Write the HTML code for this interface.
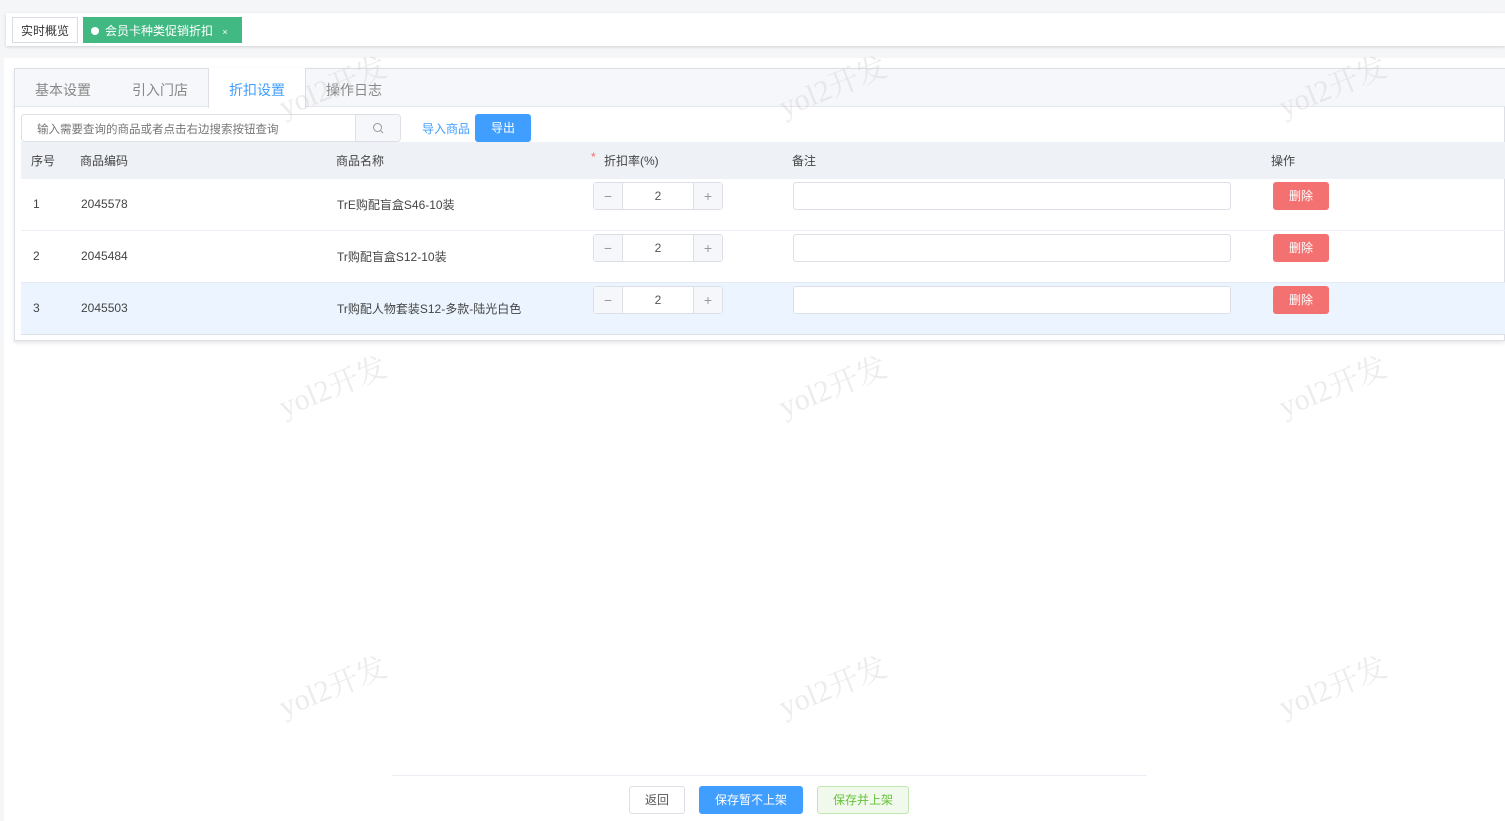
<!DOCTYPE html>
<html><head><meta charset="utf-8"><style>
*{box-sizing:border-box;margin:0;padding:0}
body{width:1505px;height:821px;overflow:hidden;background:#fff;font-family:"Liberation Sans","Noto Sans CJK SC",sans-serif;font-size:12px;color:#333;position:relative}
.abs{position:absolute}
.wm{position:absolute;font-family:"Liberation Serif","Noto Serif CJK SC",serif;font-size:30px;color:rgba(200,200,200,.35);transform:rotate(-22deg);white-space:nowrap;z-index:5;pointer-events:none}
.num{position:absolute;width:130px;height:28px;border:1px solid #dcdfe6;border-radius:3px;background:#fff;display:flex}
.num span{width:28px;background:#f5f7fa;color:#999;text-align:center;line-height:26px;font-size:14px}
.num b{flex:1;font-weight:normal;text-align:center;line-height:26px;border-left:1px solid #dcdfe6;border-right:1px solid #dcdfe6;color:#555}
.rem{position:absolute;left:793px;width:438px;height:28px;border:1px solid #dcdfe6;border-radius:3px;background:#fff}
.del{position:absolute;left:1273px;width:56px;height:28px;background:#f37171;border-radius:3px;color:#fff;text-align:center;line-height:28px}
.cell{position:absolute;color:#444}
</style></head><body>
<div class="abs" style="left:0;top:0;width:1505px;height:58px;background:#f5f6f8"></div>
<div class="abs" style="left:6px;top:13px;width:1499px;height:33px;background:#fff;box-shadow:0 1px 3px rgba(0,0,0,.15)"></div>
<div class="abs" style="left:12px;top:17px;width:66px;height:26px;border:1px solid #d8dce5;background:#fff;text-align:center;line-height:26px;color:#333">实时概览</div>
<div class="abs" style="left:83px;top:17px;width:159px;height:26px;background:#42b983;color:#fff;line-height:28px;padding-left:8px"><span style="display:inline-block;width:8px;height:8px;border-radius:50%;background:#fff;margin-right:6px"></span>会员卡种类促销折扣 <span style="font-size:9px;margin-left:6px">×</span></div>
<div class="abs" style="left:0;top:58px;width:4px;height:763px;background:#f5f6f8"></div>
<div class="abs" style="left:14px;top:68px;width:1491px;height:273px;border:1px solid #dcdfe6;box-shadow:0 2px 4px rgba(0,0,0,.1);background:#fff"></div>
<div class="abs" style="left:15px;top:69px;width:1490px;height:38px;background:#f5f7fa;border-bottom:1px solid #e4e7ed"></div>
<div class="abs" style="left:208px;top:68px;width:98px;height:40px;background:#fff;border-left:1px solid #dcdfe6;border-right:1px solid #dcdfe6"></div>
<div class="abs" style="left:35px;top:80px;font-size:14px;color:#888">基本设置</div>
<div class="abs" style="left:132px;top:80px;font-size:14px;color:#888">引入门店</div>
<div class="abs" style="left:229px;top:80px;font-size:14px;color:#409eff">折扣设置</div>
<div class="abs" style="left:326px;top:80px;font-size:14px;color:#888">操作日志</div>
<div class="abs" style="left:21px;top:114px;width:380px;height:28px;border:1px solid #dcdfe6;border-radius:4px;background:#fff"></div>
<div class="abs" style="left:355px;top:115px;width:45px;height:26px;background:#f5f7fa;border-left:1px solid #dcdfe6;border-radius:0 4px 4px 0"></div>
<svg class="abs" style="left:372px;top:122px" width="12" height="12" viewBox="0 0 12 12"><circle cx="5.5" cy="5.5" r="4" fill="none" stroke="#999" stroke-width="1"/><path d="M8.5 8.5L11 11" stroke="#999"/></svg>
<div class="abs" style="left:37px;top:121px;color:#777;font-size:11.5px">输入需要查询的商品或者点击右边搜索按钮查询</div>
<div class="abs" style="left:422px;top:120px;color:#409eff">导入商品</div>
<div class="abs" style="left:475px;top:114px;width:56px;height:28px;background:#409eff;border-radius:3px;color:#fff;text-align:center;line-height:28px">导出</div>
<div class="abs" style="left:21px;top:142px;width:1484px;height:37px;background:#eef1f6"></div>
<div class="cell" style="left:31px;top:152px;color:#444">序号</div>
<div class="cell" style="left:80px;top:152px">商品编码</div>
<div class="cell" style="left:336px;top:152px">商品名称</div>
<div class="cell" style="left:591px;top:150px;color:#f56c6c">*</div>
<div class="cell" style="left:604px;top:152px">折扣率(%)</div>
<div class="cell" style="left:792px;top:152px">备注</div>
<div class="cell" style="left:1271px;top:152px">操作</div>
<div class="abs" style="left:21px;top:230px;width:1484px;height:1px;background:#ebeef5"></div>
<div class="abs" style="left:21px;top:282px;width:1484px;height:53px;background:#ecf5ff;border-top:1px solid #e4eaf3;border-bottom:1px solid #dcdfe6"></div>

<div class="cell" style="left:33px;top:197px">1</div><div class="cell" style="left:81px;top:197px">2045578</div><div class="cell" style="left:337px;top:196px">TrE购配盲盒S46-10装</div>
<div class="num" style="left:593px;top:182px"><span>−</span><b>2</b><span>+</span></div><div class="rem" style="top:182px"></div><div class="del" style="top:182px">删除</div>
<div class="cell" style="left:33px;top:249px">2</div><div class="cell" style="left:81px;top:249px">2045484</div><div class="cell" style="left:337px;top:248px">Tr购配盲盒S12-10装</div>
<div class="num" style="left:593px;top:234px"><span>−</span><b>2</b><span>+</span></div><div class="rem" style="top:234px"></div><div class="del" style="top:234px">删除</div>
<div class="cell" style="left:33px;top:301px">3</div><div class="cell" style="left:81px;top:301px">2045503</div><div class="cell" style="left:337px;top:300px">Tr购配人物套装S12-多款-陆光白色</div>
<div class="num" style="left:593px;top:286px"><span>−</span><b>2</b><span>+</span></div><div class="rem" style="top:286px"></div><div class="del" style="top:286px">删除</div>

<div class="abs" style="left:392px;top:775px;width:755px;height:1px;background:#ebeef5"></div>
<div class="abs" style="left:629px;top:786px;width:56px;height:28px;border:1px solid #dcdfe6;border-radius:3px;text-align:center;line-height:26px;color:#555">返回</div>
<div class="abs" style="left:699px;top:786px;width:104px;height:28px;background:#409eff;border-radius:3px;text-align:center;line-height:28px;color:#fff">保存暂不上架</div>
<div class="abs" style="left:817px;top:786px;width:92px;height:28px;background:#f0f9eb;border:1px solid #c2e7b0;border-radius:3px;text-align:center;line-height:26px;color:#67c23a">保存并上架</div>

<div class="wm" style="left:275px;top:62px">yol2开发</div>
<div class="wm" style="left:775px;top:62px">yol2开发</div>
<div class="wm" style="left:1275px;top:62px">yol2开发</div>
<div class="wm" style="left:275px;top:362px">yol2开发</div>
<div class="wm" style="left:775px;top:362px">yol2开发</div>
<div class="wm" style="left:1275px;top:362px">yol2开发</div>
<div class="wm" style="left:275px;top:662px">yol2开发</div>
<div class="wm" style="left:775px;top:662px">yol2开发</div>
<div class="wm" style="left:1275px;top:662px">yol2开发</div>
</body></html>
